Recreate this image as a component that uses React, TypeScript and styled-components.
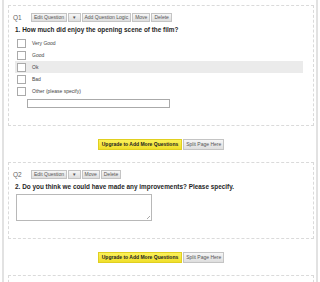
import React from "react"
import styled, { createGlobalStyle } from "styled-components"

const GlobalStyle = createGlobalStyle`
  html, body {
    margin: 0;
    padding: 0;
    background: #fff;
    font-family: "Liberation Sans", Arial, sans-serif;
    color: #222;
  }
`

type tQuestion = {
  num: number
  title: string
  logic?: boolean
  options?: string[]
  highlight?: number
  other?: boolean
  essay?: boolean
}

const QUESTIONS: tQuestion[] = [
  {
    num: 1,
    title: "How much did enjoy the opening scene of the film?",
    logic: true,
    options: ["Very Good", "Good", "Ok", "Bad", "Other (please specify)"],
    highlight: 2,
    other: true,
  },
  {
    num: 2,
    title: "Do you think we could have made any improvements? Please specify.",
    essay: true,
  },
]

export default function App() {
  return (<>
    <GlobalStyle />
    <Frame>
      {QUESTIONS.map(q => (
        <React.Fragment key={q.num}>
          <QuestionBox>
            <Toolbar>
              <QLabel>Q{q.num}</QLabel>
              <ToolButton>Edit Question</ToolButton>
              <ToolButton $arrow>▼</ToolButton>
              {q.logic && <ToolButton>Add Question Logic</ToolButton>}
              <ToolButton>Move</ToolButton>
              <ToolButton>Delete</ToolButton>
            </Toolbar>

            <QuestionTitle>{q.num}. {q.title}</QuestionTitle>

            {q.options && (
              <OptionList>
                {q.options.map((opt, i) => (
                  <OptionRow key={opt} $active={i === q.highlight}>
                    <CheckBox />
                    <span>{opt}</span>
                  </OptionRow>
                ))}
              </OptionList>
            )}
            {q.other && <OtherInput />}
            {q.essay && <Essay />}
          </QuestionBox>

          <ActionRow>
            <UpgradeButton>Upgrade to Add More Questions</UpgradeButton>
            <ToolButton $tall>Split Page Here</ToolButton>
          </ActionRow>
        </React.Fragment>
      ))}
      <QuestionBox $empty />
    </Frame>
  </>)
}

const Frame = styled.div`
  margin: 0 2px;
  border-left: 2px solid #e2e2e2;
  border-right: 2px solid #e2e2e2;
  padding: 5px 2px 0 4px;
  height: 277px;
  overflow: hidden;
`

const QuestionBox = styled.section<{ $empty?: boolean }>`
  border: 1px dashed #dadada;
  padding: 7px 4px 17px 4px;
  min-height: ${p => p.$empty ? '40px' : '0'};
`

const Toolbar = styled.div`
  display: flex;
  align-items: center;
  gap: 1px;
  height: 9px;
`

const QLabel = styled.span`
  width: 17px;
  font-size: 6.5px;
  color: #666;
  line-height: 9px;
`

const ToolButton = styled.button<{ $arrow?: boolean; $tall?: boolean }>`
  height: ${p => p.$tall ? '11px' : '9px'};
  padding: 0 ${p => p.$arrow ? '3px' : '2px'};
  margin: 0;
  border: 1px solid #c4c4c4;
  border-radius: 0;
  background: linear-gradient(#f6f6f6, #dedede);
  font-family: "Liberation Sans", Arial, sans-serif;
  font-size: ${p => p.$arrow ? '4.5px' : '5px'};
  line-height: 7px;
  color: #555;
  cursor: pointer;
`

const QuestionTitle = styled.h3`
  margin: 3px 0 2px 2px;
  font-size: 6.4px;
  line-height: 10px;
  font-weight: bold;
  color: #1f1f1f;
`

const OptionList = styled.ul`
  list-style: none;
  margin: 0 6px 0 2px;
  padding: 0;
`

const OptionRow = styled.li<{ $active?: boolean }>`
  display: flex;
  align-items: center;
  gap: 6px;
  height: 12px;
  padding-left: 2px;
  background: ${p => p.$active ? '#ebebeb' : 'transparent'};
  font-size: 5px;
  color: #444;
`

const CheckBox = styled.span`
  width: 7px;
  height: 7px;
  border: 1px solid #aaa;
  background: #fff;
`

const OtherInput = styled.div`
  margin: 2px 0 0 14px;
  width: 141px;
  height: 7px;
  border: 1px solid #aaa;
  background: #fff;
`

const Essay = styled.div`
  position: relative;
  margin: 2px 0 0 3px;
  width: 134px;
  height: 25px;
  border: 1px solid #b8b8b8;
  background: #fff;

  &::after {
    content: "";
    position: absolute;
    right: 1px;
    bottom: 1px;
    width: 3px;
    height: 3px;
    background: linear-gradient(135deg, transparent 45%, #aaa 45%, #aaa 60%, transparent 60%);
  }
`

const ActionRow = styled.div`
  display: flex;
  justify-content: center;
  gap: 1px;
  margin: 13px 0 12px 0;
`

const UpgradeButton = styled.button`
  height: 11px;
  padding: 0 3px;
  margin: 0;
  border: 1px solid #e0cf20;
  border-radius: 0;
  background: linear-gradient(#fbf15a, #f0df2a);
  font-family: "Liberation Sans", Arial, sans-serif;
  font-size: 5px;
  font-weight: bold;
  line-height: 9px;
  color: #222;
  cursor: pointer;
`
